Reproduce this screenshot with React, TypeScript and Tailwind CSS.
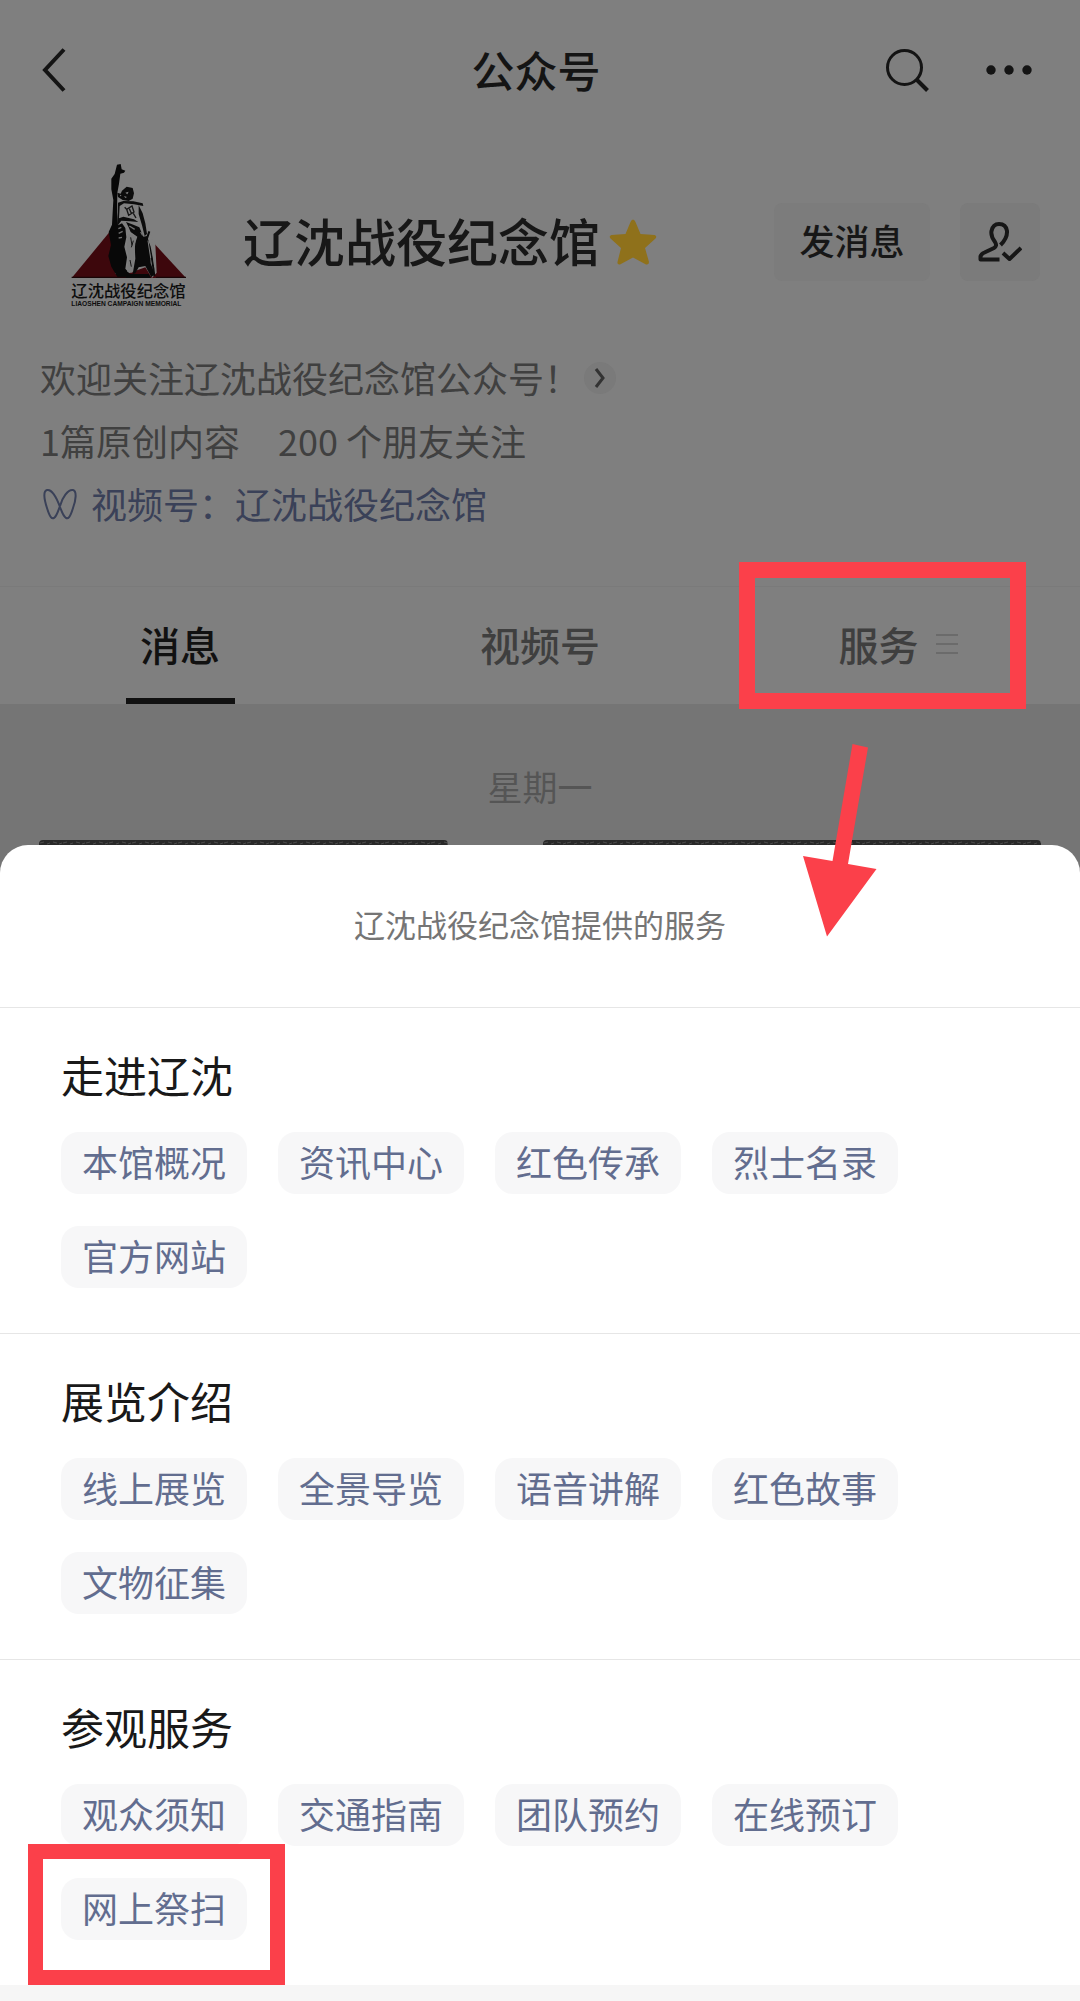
import React from "react";

type Section = { title: string; items: string[] };

const sections: Section[] = [
  { title: "走进辽沈", items: ["本馆概况", "资讯中心", "红色传承", "烈士名录", "官方网站"] },
  { title: "展览介绍", items: ["线上展览", "全景导览", "语音讲解", "红色故事", "文物征集"] },
  { title: "参观服务", items: ["观众须知", "交通指南", "团队预约", "在线预订", "网上祭扫"] },
];

const highlighted = "网上祭扫";

function MemorialLogo() {
  return (
    <svg viewBox="60 36 360 480" className="h-[160px] w-[120px] shrink-0" role="img" aria-label="辽沈战役纪念馆">
      <path d="M65 384 L178 247 L240 262 L312 280 L408 384 Z" fill="#3d070c" />
      {/* pale ground around the coat and rifle */}
      <path d="M206 160 L262 152 L282 205 L300 246 L316 280 L320 368 L306 384 L286 352 L230 372 L196 372 L200 240 Z" fill="#7f7f7f" />
      {/* raised arm and cloak */}
      <path d="M201 44 L212 42 L215 58 L226 62 L222 68 L211 71 L207 101 L202 128 L201 188 L204 226 L216 220 L226 234 L229 262 L223 290 L231 322 L226 356 L240 372 L296 372 L303 384 L204 384 L184 350 L175 318 L183 285 L176 246 L186 224 L190 150 L184 118 L184 86 L194 72 Z" fill="#080808" />
      {/* head */}
      <path d="M222 117 L230 110 L248 114 L252 130 L248 146 L236 153 L218 150 L204 141 L202 128 L212 131 L216 122 Z" fill="#0c0c0c" />
      <path d="M226 128 L236 125 L232 133 Z M222 138 L231 141 L226 144 Z M210 134 L215 137 L210 139 Z" fill="#7f7f7f" />
      {/* torso outlines */}
      <path d="M204 158 L220 153 L250 154 L278 160 L280 168 L252 163 L222 160 L209 168 L207 205 L220 200 L252 208 L265 216 L240 214 L214 212 L202 228 Z" fill="#0c0c0c" />
      <path d="M266 166 L278 190 L286 220 L291 252 L284 258 L276 226 L266 192 Z" fill="#0c0c0c" />
      <path d="M230 178 L246 168 L252 186 L236 196 Z M238 176 L244 190 M224 172 L232 180 M250 190 L258 204" fill="none" stroke="#151515" strokeWidth="4" />
      {/* right skirt of the coat */}
      <path d="M228 216 L250 224 L268 232 L280 260 L292 258 L298 284 L302 340 L314 372 L304 382 L286 348 L266 352 L256 370 L248 372 L256 326 L254 284 L262 260 L242 246 L236 232 Z" fill="#0a0a0a" />
      <path d="M205 236 L214 232 M206 250 L218 244 M238 228 L254 238 M272 246 L278 256 M206 264 L216 262" stroke="#6f6f6f" strokeWidth="4" fill="none" />
      {/* legs */}
      <path d="M236 252 L258 258 L254 300 L251 330 L247 368 L232 366 L236 318 L230 288 Z" fill="#7b7b7b" />
      <path d="M242 262 L246 286 M250 272 L244 292 M240 330 L244 350" stroke="#151515" strokeWidth="3" />
      {/* rifle */}
      <path d="M298 244 L290 268 L299 290 L308 338 L313 378" fill="none" stroke="#0b0b0b" strokeWidth="6" />
      <path d="M294 272 L302 324 M304 262 L314 352" fill="none" stroke="#7f7f7f" strokeWidth="3" />
      <path d="M65 384 V380 H228 V384 Z M318 384 V380 H408 V384 Z" fill="#180406" />
      <text x="64" y="440" fontSize="49" fontWeight="500" fill="#0d0d0d">辽沈战役纪念馆</text>
      <text x="64" y="467" fontSize="20" fontWeight="700" fill="#0d0d0d" fontFamily="Liberation Sans, sans-serif">LIAOSHEN CAMPAIGN MEMORIAL</text>
    </svg>
  );
}

function Header() {
  return (
    <header className="grid h-[140px] grid-cols-3 items-center pr-[48px] pl-[40px] text-[#141414]">
      <button type="button" aria-label="返回" className="justify-self-start">
        <svg viewBox="0 0 28 46" className="h-[46px] w-[28px]" fill="none" stroke="currentColor" strokeWidth="4">
          <path d="M24 2.500 L5 23 L24 43.500" />
        </svg>
      </button>
      <h1 className="justify-self-center pb-[2px] text-[43px] leading-[60px] font-medium">公众号</h1>
      <div className="flex items-center gap-[57px] justify-self-end">
        <button type="button" aria-label="搜索">
          <svg viewBox="0 0 44 44" className="size-[44px]" fill="none" stroke="currentColor" strokeWidth="3">
            <circle cx="19.500" cy="19.500" r="17" />
            <path d="M31.500 31.500 L42.500 42.500" strokeWidth="4" />
          </svg>
        </button>
        <button type="button" aria-label="更多">
          <svg viewBox="0 0 46 12" className="h-[12px] w-[46px]" fill="currentColor">
            <circle cx="5" cy="6" r="4.700" />
            <circle cx="23" cy="6" r="4.700" />
            <circle cx="41" cy="6" r="4.700" />
          </svg>
        </button>
      </div>
    </header>
  );
}

function Profile() {
  return (
    <section className="px-[40px] pb-[51px]">
      <div className="flex items-center pt-[22px] pl-[30px]">
        <MemorialLogo />
        <h2 className="ml-[53px] pb-[4px] text-[51px] leading-[72px] font-medium text-[#171717]">辽沈战役纪念馆</h2>
        <svg viewBox="0 0 48 46" className="ml-[9px] h-[46px] w-[48px] shrink-0" fill="#8f711b" aria-hidden="true">
          <path d="M24 0.500 Q25.500 0.500 26.500 3 L31.500 15 L45.500 16 Q48.500 17 46.500 19.500 L36 29 L40 43 Q40 46 37 45.500 L24 38.500 L11 45.500 Q8 46 8.500 43 L12 29 L1.500 19.500 Q-0.500 17 2.500 16 L16.500 15 L21.500 3 Q22.500 0.500 24 0.500 Z" />
        </svg>
        <button type="button" className="ml-auto h-[78px] w-[156px] rounded-lg bg-[#7c7c7c] pb-[4px] text-[35px] leading-[50px] font-medium text-[#171717]">
          发消息
        </button>
        <button type="button" aria-label="已关注" className="ml-[30px] flex h-[78px] w-[80px] items-center justify-center rounded-lg bg-[#7b7b7b] text-[#171717]">
          <svg viewBox="0 0 44 40" className="h-[40px] w-[44px]" fill="none" stroke="currentColor" strokeWidth="4" strokeLinejoin="round">
            <path d="M21.500 37.500 H2.500 V34.500 Q3 32 6.500 30.500 L16 26 Q19.500 24 17 20 Q12.500 14 13.500 9 Q15 2 21 2 Q28 2 29 9 Q29.500 16 22.500 23" />
            <path d="M25 31 L31.500 37 L43 26" />
          </svg>
        </button>
      </div>
      <div className="mt-[24px] text-[36px] leading-[63px] text-[#404040]">
        <p className="flex items-center gap-1">
          欢迎关注辽沈战役纪念馆公众号！
          <button type="button" aria-label="展开简介" className="flex size-[32px] items-center justify-center rounded-full bg-[#7a7a7a] text-[#333333]">
            <svg viewBox="0 0 12 22" className="h-[22px] w-[12px]" fill="none" stroke="currentColor" strokeWidth="3">
              <path d="M2 2 L9 11 L2 20" />
            </svg>
          </button>
        </p>
        <p className="flex gap-[38px]">
          <span>1篇原创内容</span>
          <span>200 个朋友关注</span>
        </p>
        <a href="#channels" className="flex w-fit items-center text-[#3a4158]">
          <svg viewBox="0 0 36 32" className="mr-[13px] ml-[2px] h-[32px] w-[36px]" fill="none" stroke="currentColor" strokeWidth="2" aria-hidden="true">
            <path d="M18 19 C14 8 9 1 5 2 C1 3 2 11 5 20 C8 30 10 31 12 30 C15 28 16 23 18 18 C20 10 26 1 31 2 C35 3 34 12 31 20 C28 30 26 31 24 30 C21 28 20 24 18 19 Z" />
          </svg>
          视频号：辽沈战役纪念馆
        </a>
      </div>
    </section>
  );
}

function Arrow() {
  return (
    <svg viewBox="803 744 74 193" className="pointer-events-none absolute top-[157px] -left-[36px] z-20 h-[193px] w-[74px] max-w-none" fill="#fb404a" aria-hidden="true">
      <path d="M852.500 744 L868 747.500 L848 864 L876.500 869 L827 936.500 L803 856 L832.500 861 Z" />
    </svg>
  );
}

function Tabs() {
  return (
    <nav className="grid h-[118px] grid-cols-3 border-t border-[#7a7a7a] text-[40px] leading-[56px] font-medium text-[#3f3f3f]">
      <button type="button" className="relative flex items-center justify-center pb-[4px] text-[#111111]">
        消息
        <span className="absolute bottom-0 h-[6px] w-[109px] bg-[#111111]" />
      </button>
      <button type="button" className="flex items-center justify-center pb-[4px]">视频号</button>
      <button type="button" className="flex justify-center pr-[4px]">
        <span className="relative flex h-full items-center gap-[17px] pb-[4px]">
          服务
          <svg viewBox="0 0 22 22" className="size-[22px]" stroke="#6b6b6b" strokeWidth="2" aria-hidden="true">
            <path d="M0 2 H22 M0 11 H22 M0 20 H22" />
          </svg>
          <span className="pointer-events-none absolute -top-[25px] -right-[68px] -bottom-[5px] -left-[100px] z-20 border-[16px] border-[#fb404a]" />
          <Arrow />
        </span>
      </button>
    </nav>
  );
}

function CardEdge() {
  return (
    <div className="flex h-[5px] justify-between gap-[95px] px-[39px]" aria-hidden="true">
      {["grow-[41]", "grow-[50]"].map((grow, index) => (
        <svg key={grow} className={`h-[5px] basis-0 rounded-t-[4px] ${grow}`}>
          <defs>
            <pattern id={`card-edge-${index}`} width="23" height="5" patternUnits="userSpaceOnUse">
              <rect width="23" height="5" fill="#292929" />
              <path d="M1 3 L5 2 M8 4 L11 3 M14 2 L18 3 M20 4 L23 3" stroke="#4b4b4b" strokeWidth="1" />
            </pattern>
          </defs>
          <rect width="100%" height="100%" fill={`url(#card-edge-${index})`} />
        </svg>
      ))}
    </div>
  );
}

function ServiceSection({ title, items }: Section) {
  return (
    <section className="border-t border-[#e6e6e6] px-[61px] pt-[36px] pb-[45px]">
      <h3 className="text-[43px] leading-[60px] text-[#191919]">{title}</h3>
      <div className="mt-[28px] flex flex-wrap gap-x-[31px] gap-y-[32px] pr-[90px]">
        {items.map((item) => (
          <button key={item} type="button" className="relative h-[62px] rounded-[18px] bg-[#f7f7f8] px-[21px] pb-[4px] text-[36px] leading-[58px] text-[#626d8f]">
            {item}
            {item === highlighted && (
              <span className="pointer-events-none absolute -top-[34px] -right-[38px] -bottom-[45px] -left-[33px] border-[15px] border-[#fb404a]" />
            )}
          </button>
        ))}
      </div>
    </section>
  );
}

export default function App() {
  return (
    <main className="flex min-h-screen flex-col bg-[#f6f6f6] font-['Noto_Sans_CJK_SC',sans-serif]">
      <div className="bg-[#7f7f7f]">
        <Header />
        <Profile />
        <Tabs />
      </div>
      <div className="bg-[#757575]">
        <p className="pt-[57px] pb-[29px] text-center text-[35px] leading-[50px] text-[#555555]">星期一</p>
        <CardEdge />
        <div role="dialog" aria-label="服务" className="rounded-t-[28px] bg-white">
          <h2 className="pt-[54px] pb-[58px] text-center text-[31px] leading-[50px] text-[#757575]">辽沈战役纪念馆提供的服务</h2>
          {sections.map((section) => (
            <ServiceSection key={section.title} {...section} />
          ))}
        </div>
      </div>
    </main>
  );
}
